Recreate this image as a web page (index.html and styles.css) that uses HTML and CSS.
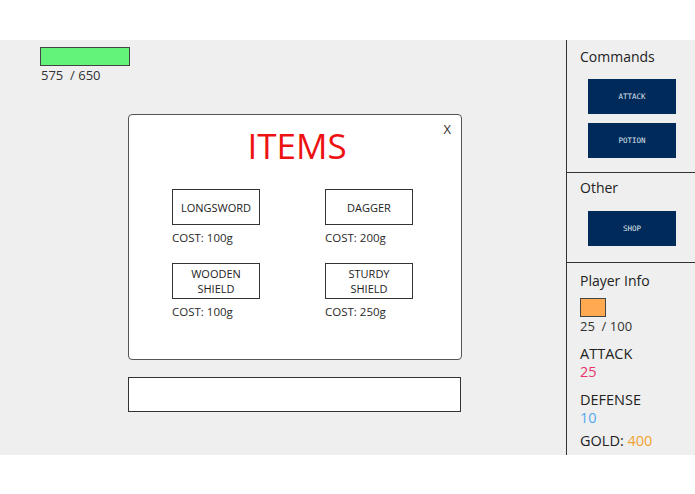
FILE: index.html
```html
<!DOCTYPE html>
<html lang="en">
<head>
  <meta charset="UTF-8">
  <title>Shop</title>
  <link rel="stylesheet" href="styles.css">
</head>
<body>
  <div class="top"></div>

  <div class="game">
    <div class="main">
      <div class="hp">
        <div class="hp-bar"></div>
        <p class="hp-text">575  / 650</p>
      </div>

      <div class="modal">
        <span class="close">X</span>
        <h1 class="modal-title">ITEMS</h1>
        <div class="items">
          <div class="item">
            <div class="item-box">LONGSWORD</div>
            <p class="cost">COST: 100g</p>
          </div>
          <div class="item">
            <div class="item-box">DAGGER</div>
            <p class="cost">COST: 200g</p>
          </div>
          <div class="item">
            <div class="item-box">WOODEN<br>SHIELD</div>
            <p class="cost">COST: 100g</p>
          </div>
          <div class="item">
            <div class="item-box">STURDY<br>SHIELD</div>
            <p class="cost">COST: 250g</p>
          </div>
        </div>
      </div>

      <div class="log"></div>
    </div>

    <div class="side">
      <div class="section commands">
        <h2 class="section-title">Commands</h2>
        <button class="cmd">ATTACK</button>
        <button class="cmd">POTION</button>
      </div>
      <div class="section other">
        <h2 class="section-title">Other</h2>
        <button class="cmd">SHOP</button>
      </div>
      <div class="section info">
        <h2 class="section-title">Player Info</h2>
        <div class="mp-bar"></div>
        <p class="mp-text">25  / 100</p>
        <p class="stat">ATTACK</p>
        <p class="stat-val attack">25</p>
        <p class="stat">DEFENSE</p>
        <p class="stat-val defense">10</p>
        <p class="stat gold">GOLD: <span class="gold-val">400</span></p>
      </div>
    </div>
  </div>
</body>
</html>
```

FILE: styles.css
```css
body{
  margin: 0;
  background-color: #fff;
  font-family: "Open Sans", "DejaVu Sans", sans-serif;
  color: #222;
}
p, h1, h2{margin: 0;}

.top{height: 40px;}

.game{
  display: flex;
  height: 415px;
  background-color: #efefef;
}

/* 왼쪽 메인 */
.main{
  width: 566px;
  padding: 7px 0 0 40px;
  box-sizing: border-box;
}
.hp-bar{
  width: 88px;
  height: 17px;
  background-color: #63f27a;
  border: 1px solid #444;
}
.hp-text{
  font-size: 13px;
  line-height: 18px;
  white-space: pre;
  padding-left: 1px;
  color: #333;
}

.modal{
  position: relative;
  width: 332px;
  height: 244px;
  margin: 30px 0 0 88px;
  background-color: #fff;
  border: 1px solid #555;
  border-radius: 4px;
}
.close{
  position: absolute;
  top: 5px;
  right: 10px;
  font-size: 13px;
  color: #333;
}
.modal-title{
  text-align: center;
  font-size: 35px;
  font-weight: normal;
  line-height: 40px;
  color: #ee1111;
  margin-top: 11px;
  padding-left: 4px;
}
.items{
  display: grid;
  grid-template-columns: 88px 88px;
  column-gap: 65px;
  row-gap: 15px;
  padding: 23px 0 0 43px;
}
.item-box{
  height: 34px;
  border: 1px solid #333;
  display: flex;
  align-items: center;
  justify-content: center;
  text-align: center;
  font-size: 11px;
  line-height: 15px;
  color: #222;
}
.cost{
  font-size: 11.5px;
  line-height: 20px;
  margin-top: 3px;
  color: #2a2a2a;
}

.log{
  width: 331px;
  height: 33px;
  margin: 17px 0 0 88px;
  background-color: #fff;
  border: 1.5px solid #333;
}

/* 오른쪽 패널 */
.side{
  flex: 1;
  border-left: 1px solid #333;
}
.section{
  padding: 7px 0 14px 13px;
  border-bottom: 1px solid #333;
}
.section-title{
  font-size: 14px;
  font-weight: normal;
  line-height: 20px;
  color: #222;
}
.cmd{
  display: block;
  width: 88px;
  height: 35px;
  margin: 9px 0 0 8px;
  border: none;
  background-color: #002a5a;
  color: #dfe4ee;
  font-family: "DejaVu Sans Mono", monospace;
  font-size: 7.5px;
  padding: 0;
}
.commands .cmd:first-of-type{margin-top: 12px;}
.other{padding: 5px 0 16px 13px;}
.other .cmd{margin-top: 13px;}
.info{
  padding-top: 8px;
  border-bottom: none;
}
.mp-bar{
  width: 24px;
  height: 17px;
  margin-top: 7px;
  background-color: #ffaa50;
  border: 1px solid #444;
}
.mp-text{
  font-size: 13px;
  line-height: 18px;
  white-space: pre;
  color: #333;
}
.stat{
  font-size: 14.5px;
  line-height: 18px;
  margin-top: 10px;
  color: #222;
}
.stat-val{
  font-size: 14.5px;
  line-height: 18px;
}
.attack{color: #e8336a;}
.defense{color: #55a8ee;}
.gold{margin-top: 5px;}
.gold-val{color: #f0a332;}
```
